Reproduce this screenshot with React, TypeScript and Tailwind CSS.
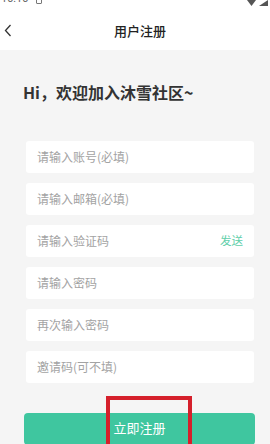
import React from "react";

const font = { fontFamily: '"Noto Sans CJK SC", "Noto Sans", sans-serif' };

function Field({ text, action }: { text: string; action?: string }) {
  return (
    <div className="flex h-[32px] w-[228px] items-center justify-between rounded-[3px] bg-white pl-[11px] pr-[11px]">
      <span className="text-[12px] leading-none text-[#a3a3a3]">{text}</span>
      {action && <span className="text-[11.5px] leading-none text-[#5fcfaa]">{action}</span>}
    </div>
  );
}

export default function App() {
  return (
    <div className="relative h-[444px] w-[270px] overflow-hidden bg-[#f5f5f5]" style={font}>
      {/* status bar */}
      <div className="flex h-[10px] items-start justify-between overflow-hidden bg-white">
        <div className="flex items-start">
          <span className="-mt-[7px] ml-[1px] text-[11px] leading-[12px] text-[#666]" style={{ fontFamily: '"Roboto", sans-serif' }}>10:10</span>
          <div className="-mt-[2px] ml-[8px] h-[6px] w-[6px] rounded-[1px] border border-[#777]" />
        </div>
        <div className="flex items-start gap-[3px] pr-[2px]">
          <svg width="9" height="6" viewBox="0 0 9 6"><path d="M0 0H9L4.5 6Z" fill="#555" /></svg>
          <svg width="9" height="6" viewBox="0 0 9 6"><path d="M9 0V6H0Z" fill="#555" /></svg>
        </div>
      </div>
      {/* header */}
      <div className="relative flex h-[40px] items-center justify-center bg-white">
        <svg className="absolute left-[4px] top-[14px]" width="8" height="13" viewBox="0 0 8 13">
          <path d="M6.5 1L1.5 6.5L6.5 12" fill="none" stroke="#333" strokeWidth="1.3" />
        </svg>
        <span className="ml-[10px] text-[13px] font-medium leading-none text-[#222]">用户注册</span>
      </div>
      {/* body */}
      <div className="flex flex-col">
        <div className="ml-[23px] mt-[33px] text-[16px] font-bold leading-[18px] text-[#333]">Hi，欢迎加入沐雪社区~</div>
        <div className="ml-[26px] mt-[40px] flex flex-col gap-[10px]">
          <Field text="请输入账号(必填)" />
          <Field text="请输入邮箱(必填)" />
          <Field text="请输入验证码" action="发送" />
          <Field text="请输入密码" />
          <Field text="再次输入密码" />
          <Field text="邀请码(可不填)" />
        </div>
        <div className="ml-[24px] mt-[30px] flex h-[32px] w-[231px] items-start justify-center rounded-[4px] bg-[#3fc69f] pt-[8px]">
          <span className="text-[13px] leading-none text-white">立即注册</span>
        </div>
      </div>
      <div className="absolute left-[106px] top-[396px] h-[70px] w-[86px] border-[4px] border-[#d5202b]" />
    </div>
  );
}
